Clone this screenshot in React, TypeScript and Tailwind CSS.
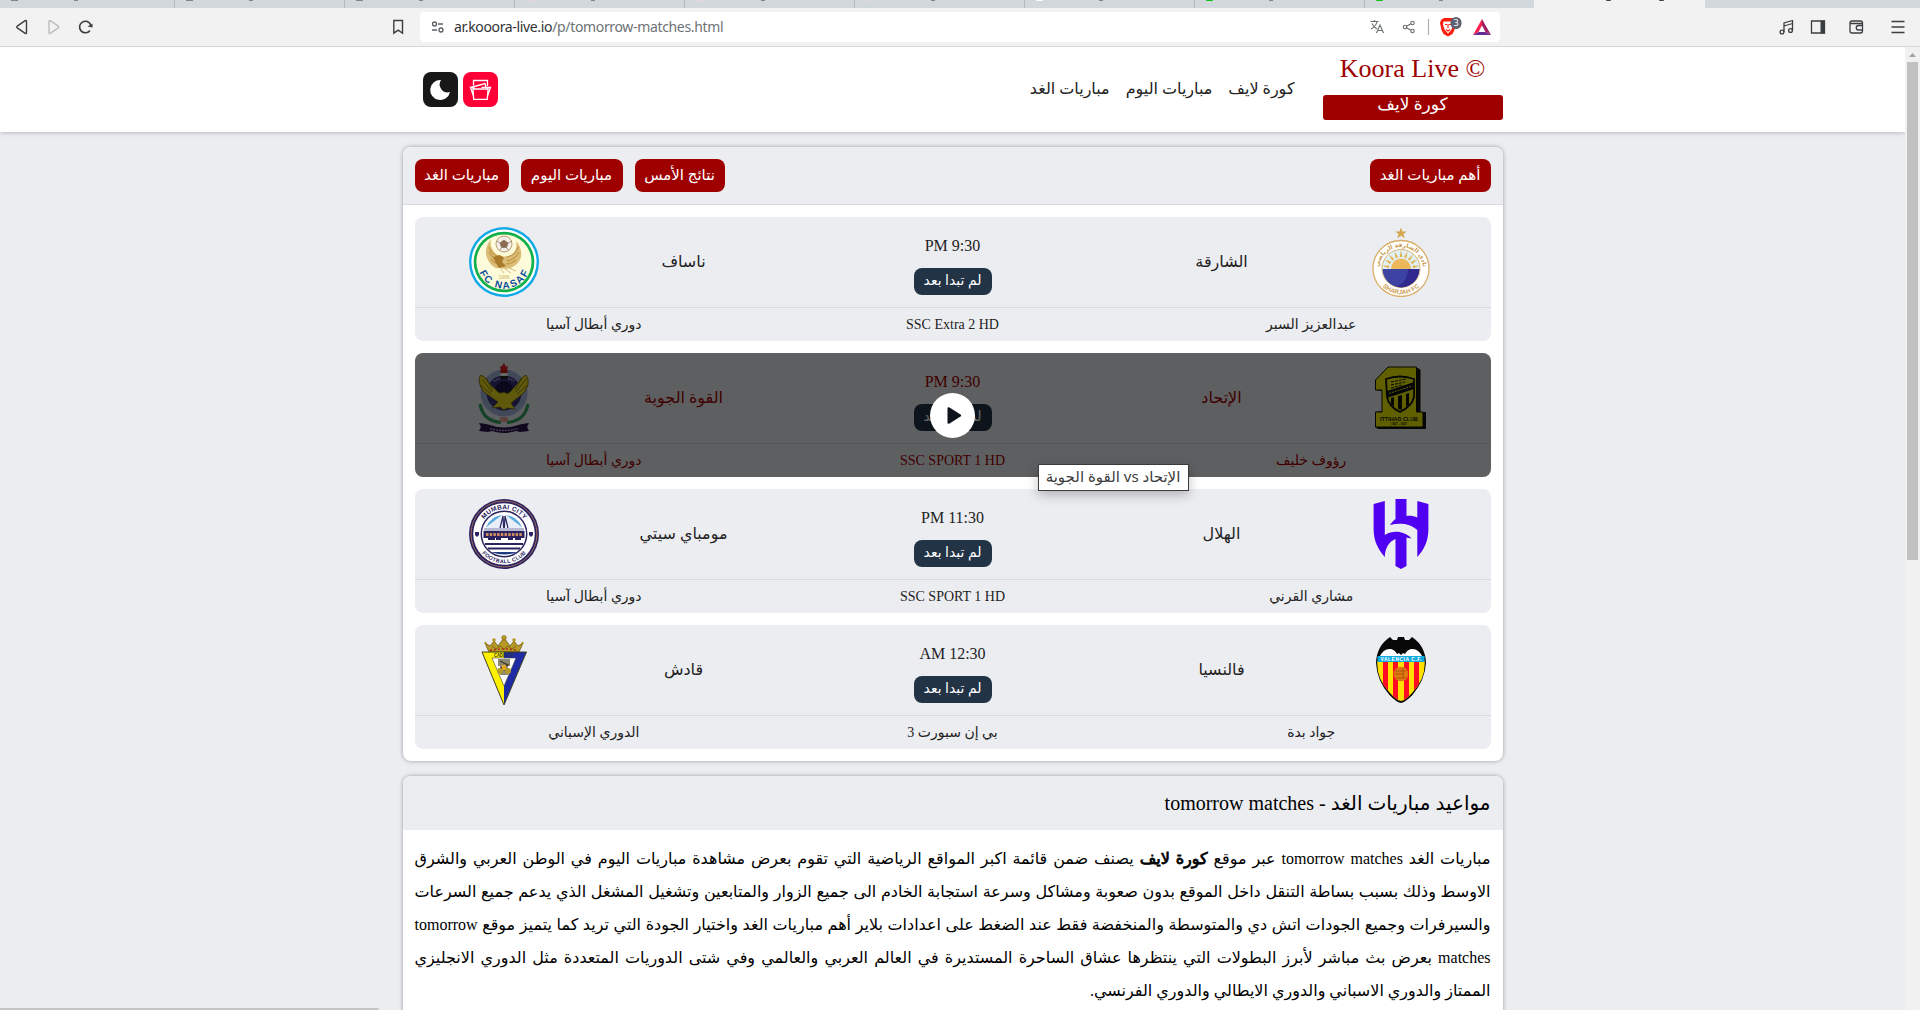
import React from "react";

const RED = "bg-[#9e0000]";

function Arc({ id, d, text, size, fill, weight = 700, len }: any) {
  return (
    <>
      <path id={id} d={d} fill="none" />
      <text fontFamily="Liberation Sans, DejaVu Sans" fontSize={size} fontWeight={weight} fill={fill} textLength={len} textAnchor="middle" direction="ltr">
        <textPath href={"#" + id} startOffset="50%">{text}</textPath>
      </text>
    </>
  );
}

function Nasaf() {
  return (
    <svg width="70" height="70" viewBox="0 0 70 70">
      <circle cx="35" cy="35" r="35" fill="#0fa9e6" />
      <circle cx="35" cy="35" r="32.600" fill="#fff" />
      <circle cx="35" cy="35" r="30.300" fill="#12b04b" />
      <circle cx="35" cy="35" r="27.600" fill="#fdfbd9" />
      <path d="M22 12c-5 6-7 14-3 21 3 6 8 9 11 8l7 1c8-1 13-6 15-12 1-6-1-12-5-16 1 6 0 11-3 13-6 4-14 3-18-1-4-4-5-9-4-14z" fill="#dcbd77" />
      <path d="M20 20c2 6 6 9 11 10M20 25c3 6 7 8 12 8M22 32c3 4 6 5 10 5M49 20c-2 6-6 9-11 10M50 25c-3 6-7 8-12 9M47 33c-3 3-6 4-10 4" stroke="#c39a48" strokeWidth="1.300" fill="none" />
      <path d="M24 30l7-2 4 3-2 4 4 4-7 2-3-5z" fill="#a97a2c" />
      <path d="M32 42l3 4M36 42l6 4M40 41l7 3" stroke="#d9bd80" strokeWidth="1" />
      <circle cx="35" cy="17" r="8" fill="#f4efe6" stroke="#a98a66" strokeWidth=".8" />
      <path d="M35 13l4 3-1.500 4.500h-5L31 16zM28 14l3 2M39 16l4-2M32.500 20.500l-2 3M37.500 20.500l2 3" fill="#8a6b52" stroke="#8a6b52" strokeWidth=".7" />
      <text x="35" y="51.500" fontSize="5" fontWeight="700" textAnchor="middle" fill="#dcc78a" fontFamily="Liberation Sans">1986</text>
      <Arc id="nasaf" d="M8.300 35A26.700 26.700 0 0 0 61.700 35" text="FC NASAF" size="10" fill="#0b4da0" weight={900} len={62} />
    </svg>
  );
}

function Sharjah() {
  const rays = [-80, -60, -40, -20, 0, 20, 40, 60, 80];
  return (
    <svg width="70" height="70" viewBox="0 0 70 70">
      <path d="M35 .5l1.500 3.900h4.300l-3.300 2.700 1.200 4.200-3.700-2.500-3.700 2.500 1.200-4.200-3.300-2.700h4.300z" fill="#d6a650" />
      <circle cx="35" cy="41.500" r="28" fill="#fff" stroke="#d9ae67" strokeWidth="1.300" />
      <circle cx="35" cy="41.500" r="19" fill="#dff1f6" stroke="#d9ae67" strokeWidth=".9" />
      <g fill="#e3b14f">
        {rays.map((a) => (
          <path key={a} d="M33.600 30L35 23l1.400 7z" transform={`rotate(${a} 35 42)`} />
        ))}
        <path d="M25 42a10 10.500 0 0 1 20 0z" fill="#edb75c" />
      </g>
      <path d="M16.600 42h36.800a18.400 18.400 0 0 1-36.800 0z" fill="#3d43a2" />
      <path d="M42 42h11.400A18.400 18.400 0 0 1 30 59.500c8-3 12-9.500 12-17.500z" fill="#30298e" />
      <Arc id="shj1" d="M13 42A22 22 0 0 1 57 42" text="نادي الشارقة الرياضي" size="6" fill="#c9994c" />
      <Arc id="shj2" d="M9.300 41.500A25.700 25.700 0 0 0 60.700 41.500" text="SHARJAH FC" size="6.200" fill="#c9994c" len={41} />
    </svg>
  );
}

function Ittihad() {
  return (
    <svg width="70" height="70" viewBox="0 0 70 70">
      <path d="M24 5h28l2.500 2v42H60v17H12l-3-2V49l7-1V28l-6-1V17z" fill="#111" />
      <path d="M22 4h28.500v45H57v15H9.500V49H16V27H9.500V17z" fill="#f2f000" stroke="#111" strokeWidth="1" />
      <path d="M20 16q14-5 28 0v18q-2 9-14 15-11-5-13-15z" fill="#f2f000" stroke="#111" strokeWidth="1.800" />
      <path d="M21 28l27-9v7l-27 9zM25 35l3-1v10l-3-3zM32 33l4-1v15l-4-1zM40 31l3-1v12l-3 2z" fill="#111" />
      <path d="M23 30.500l23-7.500" stroke="#f2f000" strokeWidth="1" strokeDasharray="2 1" />
      <path d="M25 19l15-3M25 22l14-3M25 25l11-3" stroke="#111" strokeWidth="1" strokeDasharray="3 1" />
      <text x="33" y="57.500" textAnchor="middle" fontSize="6" fontWeight="900" fill="#111" fontFamily="Liberation Sans" textLength="38" lengthAdjust="spacingAndGlyphs" direction="ltr">ITTIHAD CLUB</text>
      <text x="33" y="61.500" textAnchor="middle" fontSize="3" fontWeight="700" fill="#111" fontFamily="Liberation Sans" direction="ltr">1927 - 1927</text>
    </svg>
  );
}

function Quwa() {
  return (
    <svg width="70" height="70" viewBox="0 0 70 70">
      <circle cx="35" cy="30" r="23.500" fill="#a4b6dd" />
      <circle cx="35" cy="30" r="17.500" fill="#3a3480" />
      <circle cx="35" cy="27" r="9" fill="#191744" />
      <path d="M25 18q10-6 20 0" stroke="#b7b9e0" strokeWidth="1.500" strokeDasharray="1.500 1" fill="none" />
      <path d="M33 3l2-3 2 4 2-1-1 5h-6l-1-4z" fill="#e22020" />
      <path d="M31.500 7h7v3h-7z" fill="#c01a1a" /><path d="M31.500 10h7v3h-7z" fill="#fff" /><path d="M31.500 13h7v3h-7z" fill="#222" />
      <path d="M11 41q3 17 21 18.500M59 41q-3 17-21 18.500" stroke="#30a060" strokeWidth="3.200" fill="none" />
      <path d="M12 12q-3 3-1 10 1 6 8 10l10 7-6 6 8-1 4 3 3-2 8 1-4-6 9-7q6-4 8-11 1-7-2-10-5 2-8 8l-8 9q-3 3-6 0-4 2-6 0l-9-9q-3-6-8-8z" fill="#f0df20" stroke="#6a6010" strokeWidth=".8" />
      <path d="M13 16l10 13M11 22l11 9M57 16l-10 13M59 22l-11 9M17 15l7 12M53 15l-7 12" stroke="#6a6010" strokeWidth=".7" />
      <rect x="31" y="54" width="8" height="5" rx="1" fill="#e5a29c" />
      <path d="M10 60l7 1 4 1q14 5 28 0l4-1 7-1-2 4 2 4-9 1-4-1q-12 4-24 0l-4 1-9-1 2-4z" fill="#281448" />
      <path d="M21 65.500q14 4 28 0" stroke="#b9a9d6" strokeWidth="1.300" strokeDasharray="2 1" fill="none" />
    </svg>
  );
}

function Hilal() {
  return (
    <svg width="70" height="70" viewBox="0 0 70 70" fill="#5000f0">
      <path d="M7.600 5L18.800 2V36C27 31 38 31.500 45.500 39.500C43.500 39.300 42 38.500 40.500 38.500V67L35 70L29.500 67V40C22.500 43 19.200 49 18.800 58C12 50 7.600 42 7.600 30z" />
      <path d="M29.500 0H40.500V17C44 16.500 48 17 51.300 18.500V2L62.400 5V30C62.400 42 58.500 50 51.300 58V31C44 24.500 34 23.500 24 26C26 23 27.500 21.500 29.500 20z" />
    </svg>
  );
}

function Mumbai() {
  return (
    <svg width="70" height="70" viewBox="0 0 70 70">
      <circle cx="35" cy="35" r="35" fill="#2b235f" />
      <circle cx="35" cy="35" r="33" fill="none" stroke="#9a6a5a" strokeWidth="1" />
      <circle cx="35" cy="35" r="30.800" fill="#fff" />
      <circle cx="35" cy="35" r="23.500" fill="#2b235f" />
      <circle cx="35" cy="35" r="22" fill="#fff" />
      <path d="M17 28a19.500 19.500 0 0 1 36 0z" fill="#59ace0" />
      <path d="M16 29L33 16h4l17 13z" fill="#e9eef8" />
      <path d="M31 29l3-12 .7 12M39 29l-3-12-.7 12" stroke="#2b235f" strokeWidth="1.200" fill="none" />
      <path d="M15 29h40v3H15z" fill="#b7b8d2" /><path d="M14.500 32h41v7h-41z" fill="#2b235f" />
      <path d="M17 35.500h36" stroke="#cd8b62" strokeWidth="3" strokeDasharray="2.500 1.200" />
      <path d="M19 40h7M27 40h5M39 40h5M46 40h6" stroke="#2b235f" strokeWidth="2" />
      <path d="M16 45h38M19 49.500h32" stroke="#2b235f" strokeWidth="1.800" /><path d="M22 53h26q-12 5-26 0z" fill="#1f3a80" />
      <path d="M6 33h4v3l-2 2-2-2zM60 33h4v3l-2 2-2-2z" fill="#2b235f" />
      <Arc id="mum1" d="M10.200 35A24.800 24.800 0 0 1 59.800 35" text="MUMBAI CITY" size="6.500" fill="#2b235f" len={46} />
      <Arc id="mum2" d="M5.800 35A29.200 29.200 0 0 0 64.200 35" text="FOOTBALL CLUB" size="5.400" fill="#2b235f" len={50} />
    </svg>
  );
}

function Valencia() {
  return (
    <svg width="70" height="70" viewBox="0 0 70 70">
      <defs>
        <clipPath id="vs"><path d="M11.300 26h47.400q1 18-12.700 32-6 7-11 8-5-1-11-8Q10.300 44 11.300 26z" /></clipPath>
      </defs>
      <path d="M32 2h6l1 3h4l3-3q13.500 9 14 26-1 17-13.500 32-7 7-11.500 8-5-1-11.500-8Q11 46 10 28 10.500 11 24 2l3 3h4z" fill="#080808" />
      <path d="M13.500 22q4-9 11.500-8 4 1 6 5l2-1 2 2 2-2 2 1q2-4 6-5 7.500-1 11.500 8z" fill="#fff" />
      <g clipPath="url(#vs)">
        <path d="M10 26h50v44H10z" fill="#fedf00" />
        <path d="M17 26h5v44h-5zM27 26h5v44h-5zM38 26h5v44h-5zM48 26h5v44h-5z" fill="#ff0b24" />
      </g>
      <path d="M11.500 21h47v6h-47z" fill="#0eaadf" />
      <text x="35" y="26" fontSize="5" fontWeight="700" textAnchor="middle" fill="#fff" fontFamily="Liberation Sans" textLength="41" direction="ltr">VALENCIA C.F.</text>
      <circle cx="35" cy="39" r="7.300" fill="#e07a10" /><path d="M29 36h11M29 39h9M30 43h10M37 33v11" stroke="#a9540d" strokeWidth=".9" />
    </svg>
  );
}

function Cadiz() {
  return (
    <svg width="70" height="70" viewBox="0 0 70 70">
      <path d="M20 17l-4-9 5 3 4-5 4 5 6-8 6 8 4-5 4 5 5-3-4 9z" fill="#b79a24" stroke="#6d5810" strokeWidth=".8" />
      <path d="M23 11l4 3 4-3 4 3 4-3 4 3 4-3" stroke="#6d5810" strokeWidth=".8" fill="none" />
      <circle cx="35" cy="2.800" r="2.300" fill="#b79a24" stroke="#6d5810" strokeWidth=".5" /><circle cx="25" cy="5" r="1.800" fill="#b79a24" /><circle cx="45" cy="5" r="1.800" fill="#b79a24" /><circle cx="16.500" cy="8" r="1.200" fill="#b79a24" /><circle cx="53.500" cy="8" r="1.200" fill="#b79a24" />
      <path d="M21 15.500q14-3 28 0" stroke="#b02a20" strokeWidth="1.500" strokeDasharray="2 2" fill="none" />
      <path d="M13 17h22v53z" fill="#fdf100" /><path d="M57.500 17H35v53z" fill="#1f2ba5" />
      <path d="M13 17h44.500L35 70z" fill="none" stroke="#41411e" strokeWidth="1" />
      <path d="M23 23h24L35 51z" fill="#fff" stroke="#444" strokeWidth=".6" />
      <text x="35" y="22" fontSize="5" fontWeight="700" textAnchor="middle" fill="#333" fontFamily="Liberation Sans" textLength="20" lengthAdjust="spacingAndGlyphs" direction="ltr">CADIZ C.F</text>
      <path d="M29 24h12v7h-2v9h-8v-9h-2z" fill="#8b8874" /><path d="M31 26l8 4-7 3 8 4" stroke="#3e3520" strokeWidth="1.200" fill="none" />
      <circle cx="31" cy="36" r="3" fill="#b39b28" /><circle cx="39" cy="36" r="3" fill="#b39b28" /><path d="M33 30h4v5h-4z" fill="#e0a521" />
    </svg>
  );
}

type Match = { home: string; away: string; time: string; voice: string; channel: string; league: string; H: React.FC; A: React.FC; hover?: boolean };

const matches: Match[] = [
  { home: "الشارقة", away: "ناساف", time: "9:30 PM", voice: "عبدالعزيز السبر", channel: "SSC Extra 2 HD", league: "دوري أبطال آسيا", H: Sharjah, A: Nasaf },
  { home: "الإتحاد", away: "القوة الجوية", time: "9:30 PM", voice: "رؤوف خليف", channel: "SSC SPORT 1 HD", league: "دوري أبطال آسيا", H: Ittihad, A: Quwa, hover: true },
  { home: "الهلال", away: "مومباي سيتي", time: "11:30 PM", voice: "مشاري القرني", channel: "SSC SPORT 1 HD", league: "دوري أبطال آسيا", H: Hilal, A: Mumbai },
  { home: "فالنسيا", away: "قادش", time: "12:30 AM", voice: "جواد بدة", channel: "بي إن سبورت 3", league: "الدوري الإسباني", H: Valencia, A: Cadiz },
];

function MatchRow({ m }: { m: Match }) {
  return (
    <div className={"relative h-[124px] rounded-lg bg-[#ecedf1] " + (m.hover ? "text-[#9e0000]" : "text-[#222]")}>
      <div className="grid h-[91px] grid-cols-6 items-center border-b border-[#d9dade] text-center text-base">
        <div className="flex justify-center"><m.H /></div>
        <div>{m.home}</div>
        <div className="col-span-2 flex flex-col items-center">
          <div className="mt-1 h-[35px] leading-[26px]">{m.time}</div>
          <div className="h-[27px] w-[78px] rounded-lg bg-[#213345] text-[14px] leading-[25px] text-white">لم تبدا بعد</div>
        </div>
        <div>{m.away}</div>
        <div className="flex justify-center"><m.A /></div>
      </div>
      <div className="grid h-[33px] grid-cols-3 text-center text-[14px] leading-[33px]">
        <div>{m.voice}</div>
        <div>{m.channel}</div>
        <div>{m.league}</div>
      </div>
      {m.hover && (
        <>
          <div className="absolute inset-0 flex items-center justify-center rounded-lg bg-black/60">
            <div className="flex size-[45px] items-center justify-center rounded-full bg-white">
              <svg width="45" height="45" viewBox="0 0 45 45"><path d="M17.500 15.500v14q0 2 2 1l11-7q1.500-1 0-2l-11-7q-2-1-2 1z" fill="#0d141c" /></svg>
            </div>
          </div>
          <div dir="rtl" className="absolute left-[623px] top-[111px] z-10 h-[27px] w-[151px] whitespace-nowrap border border-[#3c3c3c] bg-white text-center font-['Noto_Sans','DejaVu_Sans',sans-serif] text-[15px] leading-[23px] text-[#3c3c3c] shadow-[0_4px_12px_rgba(0,0,0,0.25)]">
            الإتحاد vs القوة الجوية
          </div>
        </>
      )}
    </div>
  );
}

function Pill({ children, w }: { children: string; w: string }) {
  return <div className={"flex h-[33px] items-center justify-center whitespace-nowrap rounded-lg text-[15px] text-white " + RED + " " + w}>{children}</div>;
}

function Browser() {
  const tabs = ["w-[175px]", "w-[170px]", "w-[170px]", "w-[170px]", "w-[170px]", "w-[170px]", "w-[170px]", "w-[170px]", "w-[169px]"];
  return (
    <div dir="ltr" className="h-[47px] border-b border-[#d2d8da] bg-[#f2f2f2]">
      <div className="flex h-2 overflow-hidden bg-[#d3d8dc]">
        {tabs.map((w, i) => (
          <div key={i} className={"flex h-2 shrink-0 gap-14 pl-[11px] " + w + (i < 8 ? " border-r border-[#b5babd]" : "")}>
            {i >= 6 ? (
              <i className={"h-px w-[7px] rounded-b-full " + (i === 6 ? "bg-white" : "bg-[#10c510]")} />
            ) : i < 3 ? (
              <i className="h-px w-[7px] bg-[#7f8589]" />
            ) : (
              <i className="h-px w-[9px] bg-[#e2d8da]" />
            )}
            <i className="h-px w-[4px] bg-[#7f8589]" />
          </div>
        ))}
        <div className="flex w-[171px] shrink-0 gap-12 bg-[#f2f2f2] pl-[72px]">
          <i className="h-px w-[5px] rounded-b bg-[#444]" /><i className="h-px w-[5px] rounded-b bg-[#444]" />
        </div>
      </div>
      <div className="flex h-[38px] items-center">
        <svg width="420" height="38" viewBox="0 0 420 38" fill="none" stroke="#3b3e40" strokeWidth="1.400" strokeLinejoin="round">
          <path d="M26.500 13.500v11q0 1.500-1.300.8l-8-5.500q-1-.8 0-1.600l8-5.500q1.300-.7 1.300.8z" />
          <path d="M49 13.500v11q0 1.500 1.300.8l8-5.500q1-.8 0-1.600l-8-5.500q-1.300-.7-1.300.8z" stroke="#bdbdbd" />
          <path d="M90 22.500a5.800 5.800 0 1 1 .8-5.500" strokeWidth="1.600" /><path d="M87.500 18.500l5-3v4z" fill="#3b3e40" stroke="none" />
          <path d="M393.800 12.500h8.700v12.700l-4.300-3-4.400 3z" strokeLinejoin="miter" />
        </svg>
        <div className="flex h-[30px] w-[1080px] items-center rounded-[4px] bg-white">
          <svg width="34" height="30" viewBox="0 0 34 30" fill="none" stroke="#5c6063" strokeWidth="1.300">
            <circle cx="14.500" cy="12" r="2" /><path d="M18 12h5M12 18h5" /><circle cx="21" cy="18" r="2" />
          </svg>
          <div className="w-[916px] whitespace-nowrap font-['Noto_Sans','Open_Sans',sans-serif] text-[14px] leading-[30px] tracking-[-0.34px] text-[#6e7274]">
            <span className="text-[#303335]">ar.kooora-live.io</span>/p/tomorrow-matches.html
          </div>
          <svg width="130" height="30" viewBox="1370 0 130 30" fill="none" stroke="#6b6e70" strokeWidth="1.100">
            <path d="M1370.500 9.500h8M1374.500 8v1.500M1377 9.500q-1 5-6 7.500M1372 11.500q2 4 5 5.500M1376.500 21l3.500-8 3.500 8M1377.700 18.500h4.600" />
            <circle cx="1405" cy="15" r="1.700" /><circle cx="1412.500" cy="11" r="1.700" /><circle cx="1412.500" cy="19" r="1.700" /><path d="M1406.500 14.200l4.500-2.400M1406.500 15.800l4.500 2.400" />
            <path d="M1428.500 7v16" stroke="#a9abac" />
            <path d="M1441 8l3-2h8l3 2 1 3-1.500 7-2 4-4.500 2.500-4.500-2.500-2-4-1.500-7z" fill="#fb1e0e" stroke="none" />
            <path d="M1443.500 9.500h9l.5 3-1.500 5-3.500 4-3.500-4-1.500-5z" fill="#fff" stroke="none" /><path d="M1445 12.500h2M1449 12.500h2M1448 12v4M1446 17.500l2 1.500 2-1.500" stroke="#fb1e0e" />
            <rect x="1450.500" y="5" width="11" height="12" rx="5.500" fill="#5d6070" stroke="none" />
            <text x="1456" y="14.300" fontSize="9" fill="#fff" stroke="none" textAnchor="middle" fontFamily="Noto Sans">3</text>
            <path d="M1482 7l-9 16 5.500-3 3.500-6.500z" fill="#ff1f50" stroke="none" /><path d="M1482 7l9 16-5.500-3-3.500-6.500z" fill="#9e1f63" stroke="none" /><path d="M1473 23h18l-5.500-3h-7z" fill="#662d91" stroke="none" />
          </svg>
        </div>
        <svg width="420" height="38" viewBox="1500 0 420 38" fill="none" stroke="#3b3e40" strokeWidth="1.300">
          <circle cx="1782" cy="24" r="1.900" /><circle cx="1790.500" cy="22.500" r="1.900" /><path d="M1784 24V15l8.500-2.500v10M1784 18l8.500-2.500" />
          <path d="M1811.500 13h13v12h-13z" /><path d="M1820.500 12.500h4.500v13h-4.500z" fill="#3b3e40" stroke="none" />
          <rect x="1850" y="13" width="12.500" height="12" rx="2" /><path d="M1850 15.500h12.500M1862.500 17.500h-4a2 2 0 0 0 0 4.500h4" />
          <path d="M1891.500 13.500h13M1891.500 19h13M1891.500 24.500h13" />
        </svg>
      </div>
    </div>
  );
}

export default function App() {
  return (
    <div dir="rtl" className="relative flex h-[1010px] w-[1920px] flex-col overflow-hidden bg-[#ecedf1] font-['Liberation_Serif','DejaVu_Sans',serif] text-base text-[#222]">
      <Browser />
      <div dir="ltr" className="flex min-h-0 flex-1">
        <div dir="rtl" className="w-[1905px] overflow-hidden">
          <header className="h-[85px] bg-white shadow-[0_0_5px_rgba(0,0,0,0.3)]">
            <div className="mx-auto flex h-full w-[1100px]">
              <div className="w-[180px] text-center">
                <div dir="ltr" className="h-[48px] pt-1 text-[26px] leading-[36px] text-[#9e0000]">Koora Live ©</div>
                <div className={"h-[25px] rounded-[3px] text-[17px] leading-[20px] text-white " + RED}>كورة لايف</div>
              </div>
              <nav className="mr-[28px] flex grow gap-4 leading-[83px]">
                <span>كورة لايف</span><span>مباريات اليوم</span><span>مباريات الغد</span>
              </nav>
              <div className="ml-5 mt-[25px] flex gap-[5px]">
                <div className="size-[35px] rounded-lg bg-[#ff0036]">
                  <svg width="35" height="35" viewBox="0 0 35 35" fill="none" stroke="#fff" strokeWidth="1.300">
                    <path d="M10 17h15l-.7 10.300H10.700zM10.400 24L7.500 15.500h4M24.600 24l2.900-8.500h-4M7.500 15.500L22 11.500l1.200 4M10.500 13.500v-5h14v5.500M18.500 15.300h9" />
                  </svg>
                </div>
                <div className="size-[35px] rounded-lg bg-[#181818]">
                  <svg width="35" height="35" viewBox="0 0 35 35"><path d="M18 8A10 10 0 1 0 27 20A8 8 0 0 1 18 8z" fill="#fff" /></svg>
                </div>
              </div>
            </div>
          </header>
          <main className="mx-auto mt-[15px] w-[1100px]">
            <section className="h-[614px] overflow-hidden rounded-lg bg-white shadow-[0_0_4px_rgba(0,0,0,0.35)]">
              <div className="flex h-[58px] items-start justify-between border-b border-[#d9dade] bg-[#ecedf1] px-3 pt-3">
                <Pill w="w-[121px]">أهم مباريات الغد</Pill>
                <div className="flex gap-3">
                  <Pill w="w-[90px]">نتائج الأمس</Pill>
                  <Pill w="w-[102px]">مباريات اليوم</Pill>
                  <Pill w="w-[94px]">مباريات الغد</Pill>
                </div>
              </div>
              <div className="flex flex-col gap-3 p-3">
                {matches.map((m, i) => <MatchRow key={i} m={m} />)}
              </div>
            </section>
            <section className="mt-[15px] h-[300px] overflow-hidden rounded-lg bg-white text-black shadow-[0_0_4px_rgba(0,0,0,0.35)]">
              <h1 className="h-[54px] bg-[#ecedf1] px-3 text-[20px] leading-[54px]">مواعيد مباريات الغد - tomorrow matches</h1>
              <p className="p-3 text-justify leading-[33px]">
                مباريات الغد tomorrow matches عبر موقع <b className="font-normal [-webkit-text-stroke:0.8px_black]">كورة لايف</b> يصنف ضمن قائمة اكبر المواقع الرياضية التي تقوم بعرض مشاهدة مباريات اليوم في الوطن العربي والشرق الاوسط وذلك بسبب بساطة التنقل داخل الموقع بدون صعوبة ومشاكل وسرعة استجابة الخادم الى جميع الزوار والمتابعين وتشغيل المشغل الذي يدعم جميع السرعات والسيرفرات وجميع الجودات اتش دي والمتوسطة والمنخفضة فقط عند الضغط على اعدادات بلاير أهم مباريات الغد واختيار الجودة التي تريد كما يتميز موقع tomorrow matches بعرض بث مباشر لأبرز البطولات التي ينتظرها عشاق الساحرة المستديرة في العالم العربي والعالمي وفي شتى الدوريات المتعددة مثل الدوري الانجليزي الممتاز والدوري الاسباني والدوري الايطالي والدوري الفرنسي.
              </p>
            </section>
          </main>
        </div>
        <div className="flex w-[15px] flex-col items-center bg-[#f1f1f1]">
          <svg width="15" height="15" viewBox="0 0 15 15"><path d="M4 10l3.500-4 3.500 4z" fill="#a3a3a3" /></svg>
          <div className="h-[498px] w-[11px] bg-[#c1c1c1]" />
        </div>
      </div>
      <div className="absolute bottom-0 left-0 h-[2px] w-[379px] rounded-tr bg-[#c3c5c9]" />
    </div>
  );
}
